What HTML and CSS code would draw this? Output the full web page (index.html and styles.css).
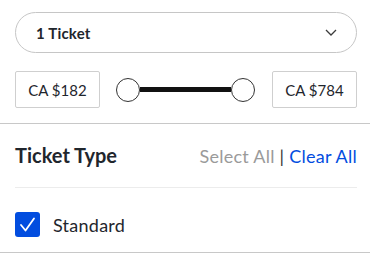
FILE: index.html
```html
<!DOCTYPE html>
<html>
<head>
<meta charset="utf-8">
<link rel="stylesheet" href="styles.css">
</head>
<body>
<div class="panel">
  <div class="inner">
    <div class="dropdown">
      <span class="dropdown-label">1 Ticket</span>
      <svg class="chevron" width="12" height="7" viewBox="0 0 12 7"><path d="M1 1 L6 6 L11 1" fill="none" stroke="#3b3b3b" stroke-width="1.3"/></svg>
    </div>
    <div class="price-row">
      <div class="price-box">CA $182</div>
      <div class="slider">
        <span class="knob"></span>
        <span class="track"></span>
        <span class="knob"></span>
      </div>
      <div class="price-box">CA $784</div>
    </div>
  </div>
  <div class="divider"></div>
  <div class="inner">
    <div class="section-header">
      <span class="section-title">Ticket Type</span>
      <span class="actions"><span class="select-all">Select All</span> <span class="sep">|</span> <span class="clear-all">Clear All</span></span>
    </div>
    <div class="light-divider"></div>
    <div class="option">
      <span class="checkbox"><svg width="25" height="25" viewBox="0 0 25 25"><path d="M6 13 L10.5 18.5 L19 6.5" fill="none" stroke="#fff" stroke-width="1.8" stroke-linecap="round" stroke-linejoin="round"/></svg></span>
      <span class="option-label">Standard</span>
    </div>
  </div>
  <div class="divider"></div>
</div>
</body>
</html>
```

FILE: styles.css
```css
html, body {
  margin: 0;
  padding: 0;
  background: #fff;
}
body {
  font-family: Lato, "Noto Sans", sans-serif;
  color: #1f262d;
}
.inner {
  padding: 0 13px 0 15px;
}
.dropdown {
  margin-top: 12px;
  height: 41px;
  box-sizing: border-box;
  border: 1px solid #c6c6c6;
  border-radius: 21px;
  display: flex;
  align-items: center;
  justify-content: space-between;
  padding: 0 19px 0 20px;
}
.dropdown-label {
  font-size: 15px;
  font-weight: 700;
  letter-spacing: 0.2px;
}
.chevron {
  display: block;
}
.price-row {
  margin-top: 18px;
  display: flex;
  align-items: center;
  height: 37px;
}
.price-box {
  width: 85px;
  height: 37px;
  box-sizing: border-box;
  border: 1px solid #cfcfcf;
  border-radius: 2px;
  display: flex;
  align-items: center;
  justify-content: center;
  font-size: 15px;
}
.slider {
  flex: 1;
  margin: 0 17px 0 16px;
  display: flex;
  align-items: center;
}
.knob {
  width: 24px;
  height: 24px;
  box-sizing: border-box;
  border: 1px solid #333;
  border-radius: 50%;
  background: #fff;
}
.track {
  flex: 1;
  height: 5px;
  background: #111;
}
.divider {
  height: 1px;
  background: #c8c8c8;
  margin-top: 15px;
}
.section-header {
  display: flex;
  justify-content: space-between;
  align-items: baseline;
  padding-top: 19px;
  height: 44px;
}
.section-title {
  font-size: 20px;
  font-weight: 700;
}
.actions {
  font-size: 18px;
  letter-spacing: 0.25px;
}
.select-all {
  color: #9a9a9a;
}
.sep {
  color: #333;
}
.clear-all {
  color: #024ddf;
}
.light-divider {
  height: 1px;
  background: #ececec;
}
.option {
  display: flex;
  align-items: center;
  padding-top: 24px;
  height: 25px;
}
.checkbox {
  width: 25px;
  height: 25px;
  border-radius: 3px;
  background: #024ddf;
  display: block;
}
.checkbox svg {
  display: block;
}
.option-label {
  margin-left: 13px;
  font-size: 18px;
  letter-spacing: 0.25px;
}
```
